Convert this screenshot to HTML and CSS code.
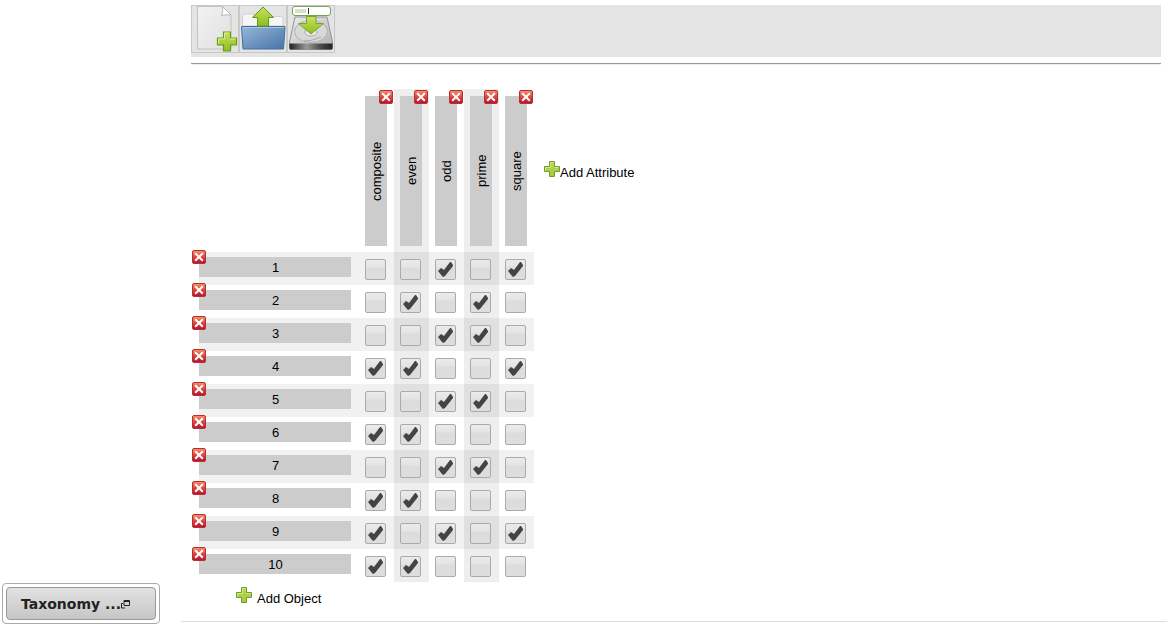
FILE: index.html
```html
<!DOCTYPE html>
<html lang="en">
<head>
<meta charset="utf-8">
<title>Context editor</title>
<link rel="stylesheet" href="styles.css">
</head>
<body>
<svg class="defs" aria-hidden="true">
  <defs>
    <linearGradient id="red" x1="0" y1="0" x2="0" y2="1"><stop offset="0" stop-color="#f2956c"/><stop offset=".5" stop-color="#dc463c"/><stop offset="1" stop-color="#b01233"/></linearGradient>
    <linearGradient id="green" x1="0" y1="0" x2="0" y2="1"><stop offset="0" stop-color="#c9e060"/><stop offset="1" stop-color="#8dbd1c"/></linearGradient>
    <linearGradient id="leaf" x1="0" y1="0" x2="0" y2="1"><stop offset="0" stop-color="#bcd84e"/><stop offset="1" stop-color="#a3c83e"/></linearGradient>
    <linearGradient id="paper" x1="0" y1="0" x2="1" y2="1"><stop offset="0" stop-color="#f2f2f2"/><stop offset="1" stop-color="#e0e0e0"/></linearGradient>
    <linearGradient id="blue" x1="0" y1="0" x2="1" y2="1"><stop offset="0" stop-color="#98b6da"/><stop offset="1" stop-color="#4674a8"/></linearGradient>
    <linearGradient id="metal" x1="0" y1="0" x2="1" y2="1"><stop offset="0" stop-color="#eeeeee"/><stop offset="1" stop-color="#b0b0b0"/></linearGradient>
    <linearGradient id="dark" x1="0" y1="0" x2="1" y2="0"><stop offset="0" stop-color="#222222"/><stop offset=".4" stop-color="#999999"/><stop offset=".75" stop-color="#444444"/><stop offset="1" stop-color="#222222"/></linearGradient>
    <symbol id="remove" viewBox="0 0 14 14"><rect x=".5" y=".5" width="13" height="13" rx="1.5" fill="url(#red)" stroke="#bb2f30"/><path d="M3.200 3.200l7.600 7.600M10.800 3.200l-7.600 7.600" stroke="#fff" stroke-width="2"/></symbol>
    <symbol id="plus" viewBox="0 0 16 16"><path d="M5.500.500h5v5h5v5h-5v5h-5v-5h-5v-5h5z" fill="url(#leaf)" stroke="#6f9c36"/><path d="M6.500 6.500v-5h3M1.500 9.500v-3h5M10.500 6.500h4" fill="none" stroke="#d2e684"/></symbol>
  </defs>
</svg>
<aside class="sidebar">
  <div class="panel">
    <button class="panel-button" type="button"><span>Taxonomy ...</span><svg class="popout" viewBox="0 0 9 9"><path d="M3 .5h5.500v5H3zM3 1.500h5.500M2 3.500H.500v4.500H4" fill="none" stroke="#222"/></svg></button>
  </div>
</aside>
<main class="main">
  <div class="toolbar">
    <button class="tool" type="button" aria-label="New">
      <svg viewBox="0 0 46 46"><path d="M5.500.500h25l8.500 8.500v34h-33.500z" fill="url(#paper)" stroke="#c2c2c2"/><path d="M30.500.500c.5 4 0 7-1 9.500 3-1.200 6-1.500 9.500-1z" fill="#fff" stroke="#b8b8b8"/><path d="M31.500 26h7v6h6v7h-6v6h-7v-6h-6v-7h6z" fill="url(#green)" stroke="#649b1c" stroke-width="1.200"/><path d="M32.500 33v-6h5M26.500 38v-5h6M38 33h5.500" fill="none" stroke="#dcec96"/></svg>
    </button>
    <button class="tool" type="button" aria-label="Open">
      <svg viewBox="0 0 46 46"><path d="M2.500 20V10l1.500-2h9l2 2.500h26.500l1.500 1.500v8z" fill="#f6f6f6" stroke="#cfcfcf"/><path d="M1.500 20.500h43.500l-1.500 22.500h-40.500z" fill="url(#blue)" stroke="#426e9f" stroke-linejoin="round"/><path d="M2 21.500h42" stroke="#adc6e4"/><path d="M23 1l10.500 10.500h-5v8.500h-11v-8.500h-5z" fill="url(#green)" stroke="#5f9a18"/></svg>
    </button>
    <button class="tool" type="button" aria-label="Save">
      <svg viewBox="0 0 46 46"><path d="M7 11h32l5.500 25v6q0 1.500-1.500 1.500H3q-1.500 0-1.500-1.500v-6z" fill="url(#metal)" stroke="#939393"/><ellipse cx="23" cy="25.500" rx="16.500" ry="11" fill="#d8d8d8" stroke="#b0b0b0"/><ellipse cx="23" cy="26" rx="6" ry="4" fill="#eee" stroke="#aaa"/><path d="M33 31c-4 1-8 4-17 4" fill="none" stroke="#a5a5a5"/><path d="M1.500 37.500h43V42q0 1.500-1.500 1.500H3Q1.500 43.500 1.500 42z" fill="url(#dark)"/><rect x="4.500" y=".5" width="38" height="9" rx="2.500" fill="#fff" stroke="#72a750"/><path d="M7 3h11v4H7z" fill="#dcdcd4"/><path d="M20.500 2v6" stroke="#333"/><path d="M18.500 10.500h9.500v7h7.500L23 28 10.500 17.500h8z" fill="url(#green)" stroke="#72a92c"/></svg>
    </button>
  </div>
  <hr class="rule">
  <table class="context">
    <thead>
      <tr>
        <td class="corner"></td>
        <th class="attr" scope="col"><span class="attr-name">composite</span><button class="remove" type="button" aria-label="Remove composite"><svg><use href="#remove"/></svg></button></th>
        <th class="attr" scope="col"><span class="attr-name">even</span><button class="remove" type="button" aria-label="Remove even"><svg><use href="#remove"/></svg></button></th>
        <th class="attr" scope="col"><span class="attr-name">odd</span><button class="remove" type="button" aria-label="Remove odd"><svg><use href="#remove"/></svg></button></th>
        <th class="attr" scope="col"><span class="attr-name">prime</span><button class="remove" type="button" aria-label="Remove prime"><svg><use href="#remove"/></svg></button></th>
        <th class="attr" scope="col"><span class="attr-name">square</span><button class="remove" type="button" aria-label="Remove square"><svg><use href="#remove"/></svg></button></th>
        <td class="add-attr"><button class="add" type="button"><svg><use href="#plus"/></svg><span>Add Attribute</span></button></td>
      </tr>
    </thead>
    <tbody id="objects"></tbody>
    <tfoot>
      <tr><td class="add-object"><button class="add add-spaced" type="button"><svg><use href="#plus"/></svg><span>Add Object</span></button></td></tr>
    </tfoot>
  </table>
</main>
<script src="app.js"></script>
</body>
</html>
```
FILE: styles.css
```css
* { box-sizing: border-box; }
body {
  margin: 0;
  min-height: 100vh;
  display: grid;
  grid-template-columns: 181px 1fr;
  background: #fff;
  color: #000;
  font: 13px/16px "Liberation Sans", Arial, sans-serif;
}
button {
  margin: 0;
  padding: 0;
  border: 0;
  background: none;
  color: inherit;
  font: inherit;
  cursor: pointer;
}
svg { display: block; }
.defs { position: absolute; width: 0; height: 0; }
.sidebar {
  display: flex;
  align-items: flex-end;
  padding: 2px;
}
.panel {
  width: 158px;
  padding: 3px;
  border: 1px solid #aaa;
  border-radius: 4px;
}
.panel-button {
  display: flex;
  align-items: center;
  width: 100%;
  height: 33px;
  padding: 1px 14px 0;
  border: 1px solid #999;
  border-radius: 4px;
  background: linear-gradient(#e2e2e2, #c6c6c6);
  color: #222;
  font: bold 14px/18px "DejaVu Sans", sans-serif;
  white-space: nowrap;
}
.popout { width: 9px; height: 9px; }
.main {
  align-self: start;
  padding: 5px 0 14px;
  border-bottom: 1px solid #ddd;
}
.toolbar {
  display: flex;
  height: 52px;
  margin: 0 6px 0 10px;
  background: #e4e4e4;
}
.tool {
  width: 48px;
  height: 48px;
  border: 1px solid #c8c8c8;
}
.tool svg { width: 46px; height: 46px; }
.rule {
  height: 2px;
  margin: 6px 6px 24px 10px;
  border: 0;
  border-top: 1px solid #999;
  border-bottom: 1px solid #eee;
}
.context {
  margin-left: 18px;
  border-collapse: collapse;
}
.context td, .context th {
  padding: 0;
  font-weight: normal;
  vertical-align: top;
}
.corner { width: 160px; }
.context .attr {
  position: relative;
  width: 35px;
  padding: 7px 7px 6px 6px;
}
.attr-name {
  display: flex;
  align-items: center;
  justify-content: center;
  width: 22px;
  height: 150px;
  padding-right: 2px;
  background: #ccc;
  writing-mode: vertical-rl;
  transform: rotate(180deg);
}
.remove {
  position: absolute;
  top: 1px;
  right: 1px;
  width: 14px;
  height: 14px;
}
.remove svg { width: 14px; height: 14px; }
.context .attr:nth-child(odd), .cell:nth-child(odd) { background: #eee; }
.row:nth-child(odd) .object, .row:nth-child(odd) .cell:nth-child(even) { background: #f1f1f1; }
.row:nth-child(odd) .cell:nth-child(odd) { background: #e0e0e0; }
.row { height: 33px; }
.context .object {
  position: relative;
  padding: 5px 8px 8px 0;
}
.object-name {
  display: block;
  padding: 3px 0 1px 1px;
  background: #ccc;
}
.object .remove { top: -2px; left: -7px; }
.context .cell { padding: 7px 7px 5px 6px; }
.check {
  appearance: none;
  display: block;
  width: 21px;
  height: 21px;
  margin: 0;
  border: 1px solid #aaa;
  border-radius: 2px;
  background: linear-gradient(#ebebeb 0, #e4e4e4 35%, #dcdcdc 45%, #dedede);
}
.check:checked::before {
  content: "";
  display: block;
  width: 19px;
  height: 19px;
  background: #444;
  clip-path: polygon(2px 11px, 5px 8px, 8px 10px, 14px 2px, 15px 2px, 17px 5px, 17px 6px, 9px 16px, 7px 17px, 6px 16px);
}
.context .add-attr {
  padding-left: 10px;
  vertical-align: middle;
}
.add {
  display: flex;
  align-items: flex-start;
  white-space: nowrap;
}
.add svg { width: 16px; height: 16px; }
.add span { padding-top: 4px; }
.add-spaced { gap: 5px; }
.context .add-object { padding: 5px 0 0 37px; }
```
FILE: app.js
```js
const attributes = ["composite", "even", "odd", "prime", "square"];
const objects = {
  1: "00101", 2: "01010", 3: "00110", 4: "11001", 5: "00110",
  6: "11000", 7: "00110", 8: "11000", 9: "10101", 10: "11000"
};
document.getElementById("objects").innerHTML = Object.entries(objects).map(([name, marks]) => `
  <tr class="row">
    <th class="object" scope="row"><span class="object-name">${name}</span><button class="remove" type="button" aria-label="Remove ${name}"><svg><use href="#remove"/></svg></button></th>
    ${attributes.map((attribute, i) => `<td class="cell"><input class="check" type="checkbox" aria-label="${name} ${attribute}"${marks[i] === "1" ? " checked" : ""}></td>`).join("")}
  </tr>`).join("");
```
